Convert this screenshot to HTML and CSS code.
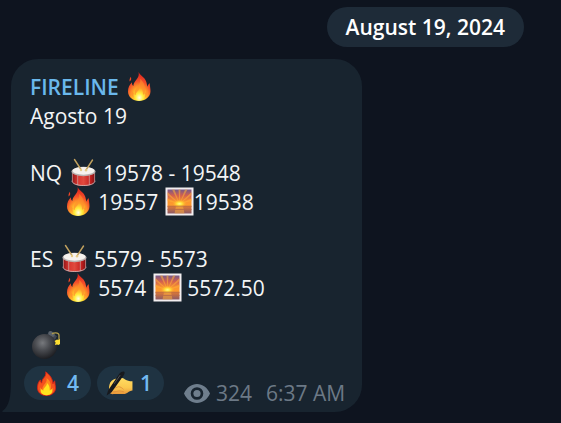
FILE: index.html
```html
<!DOCTYPE html>
<html lang="en">
<head>
<meta charset="utf-8">
<title>FIRELINE</title>
<link rel="stylesheet" href="styles.css">
</head>
<body>
<svg class="defs" aria-hidden="true">
  <defs>
    <radialGradient id="flame" cx=".5" cy=".88" r=".85">
      <stop offset="0" stop-color="#fffbc0"/><stop offset=".2" stop-color="#ffe632"/><stop offset=".42" stop-color="#ffa028"/><stop offset=".66" stop-color="#f4502a"/><stop offset="1" stop-color="#d91f1c"/>
    </radialGradient>
    <radialGradient id="glow" cx=".5" cy=".8" r=".7">
      <stop offset="0" stop-color="#fffde0"/><stop offset=".45" stop-color="#ffee3c"/><stop offset="1" stop-color="#ff9a25"/>
    </radialGradient>
    <linearGradient id="shell">
      <stop offset="0" stop-color="#8d1517"/><stop offset=".25" stop-color="#d8352f"/><stop offset=".5" stop-color="#e04a3e"/><stop offset=".8" stop-color="#c3201f"/><stop offset="1" stop-color="#7d1013"/>
    </linearGradient>
    <linearGradient id="sky" x2="0" y2="1">
      <stop offset="0" stop-color="#75598a"/><stop offset=".35" stop-color="#d2604f"/><stop offset=".7" stop-color="#fb952f"/><stop offset="1" stop-color="#ff9b2d"/>
    </linearGradient>
    <linearGradient id="sea" x2="0" y2="1">
      <stop offset="0" stop-color="#e07a35"/><stop offset="1" stop-color="#8d5964"/>
    </linearGradient>
    <radialGradient id="sun">
      <stop offset="0" stop-color="#fffa8c"/><stop offset=".4" stop-color="#ffdf38"/><stop offset="1" stop-color="#ffae2c" stop-opacity="0"/>
    </radialGradient>
    <radialGradient id="iron" cx=".42" cy=".36" r=".65">
      <stop offset="0" stop-color="#77797d"/><stop offset=".45" stop-color="#4a4c51"/><stop offset="1" stop-color="#1d1e22"/>
    </radialGradient>
    <linearGradient id="skin" x2="0" y2="1">
      <stop offset="0" stop-color="#ffdc62"/><stop offset=".6" stop-color="#fbc84e"/><stop offset="1" stop-color="#e8963a"/>
    </linearGradient>
  </defs>
  <symbol id="fire" viewBox="0 0 29 29">
    <path fill="url(#flame)" d="M13.500 0c.8 3-.1 5.200-2 7.500C9.500 10 8.500 11.600 8.300 14c-1-.8-1.500-2-1.300-3.700C4.500 12.500 3 16 3 19.500 3 25 8 29 14 29s11.500-4 11.500-9.700c0-3-.7-5.300-.7-8-1.300.7-2 1.900-2.400 3.500C21.700 11.500 21.500 9 19.500 6.500 17.600 4.200 15 3.200 13.500 0z"/>
    <path fill="#ef4526" d="M6 4.800C4.800 6.200 4.200 7.900 4.700 9.400c.9-.8 1.500-1.600 1.500-2.700 0-.8-.3-1.200-.2-1.900z"/>
    <path fill="#ff8b2b" opacity=".65" d="M15 7c1 4-1.500 6-3.500 9C10 18.200 9.500 20 10 22c-1.800-.8-3-2.300-3.300-4C5 22 7.500 27 14 27.500c6 0 9-4 8.500-9-.8 1.500-1.600 2.300-2.800 2.700C20.500 15.500 19.500 10 15 7z"/>
    <path fill="url(#glow)" d="M14.500 14.500c.5 2.500-1 4-2.500 5.500-1 1-1.300 2-1.200 3-1-.4-1.600-1-2-2-1.300 4 .7 7.500 5.500 7.500s7-3.500 5.700-7.500c-.6 1-1.200 1.500-2 1.800.2-3.500-.8-6.500-3.500-8.300z"/>
  </symbol>
  <symbol id="fire-flat" viewBox="0 0 29 29">
    <path fill="#f4511e" stroke="#d51f16" d="M13.500 1c.8 3-.4 5-2.200 7C9.600 10 9 11.500 9 14c-1-.7-1.600-2-1.500-3.700C5 12.500 4 16 4 19.500 4 25 8.500 28.500 14.500 28.500S25 25 25 19.500c0-3-1-5-1-8-1.200.7-1.700 1.700-2 3.300C21.700 9 18 4 13.500 1z"/>
    <path fill="#ff8a1c" d="M14.500 8c1 4-1.500 6-3.500 9-1.300 2-1.500 3-1 4.500-1.600-.5-2.600-1.500-3-3C6 24 9 28 14.500 28c6 0 8.500-4 7.500-9-.8 1.400-1.500 2-2.500 2.400C20.500 15 18.500 11 14.500 8z"/>
    <path fill="#ffe51f" d="M15 14c.3 2.800-1.500 4-3 5.700-1 1.100-1.300 2.100-1 3.100-1.200-.2-2-.8-2.500-1.800C7 25 9 28 14.500 28s7.500-3 6-7c-.7 1-1.400 1.500-2.300 1.700.3-3.700-.7-6.700-3.200-8.700z"/>
  </symbol>
  <symbol id="drum" viewBox="0 0 29 29">
    <path fill="url(#shell)" d="M3 13.500h23V23c0 3-5 5-11.500 5S3 26 3 23z"/>
    <path fill="none" stroke="#c9a9a6" stroke-width=".7" d="M3.400 14v9.500M8.700 17v10M20.300 17v10M25.600 14v9.500"/>
    <path fill="none" stroke="#c7c2c2" stroke-width=".8" d="M3 22.800c0 2.800 5 4.700 11.500 4.700S26 25.600 26 22.800"/>
    <ellipse cx="14.500" cy="13.500" rx="12" ry="4.700" fill="#b9b2b0"/>
    <ellipse cx="14.500" cy="12.800" rx="11" ry="3.900" fill="#f6f2ee"/>
    <path fill="none" stroke="#c2a25f" stroke-width="1.400" stroke-linecap="round" d="M5.500 1.500l6.500 10M23.500 2l-6.500 10"/>
    <circle cx="12" cy="12" r="1.200" fill="#e6cb85"/><circle cx="17" cy="12.300" r="1.200" fill="#e6cb85"/>
  </symbol>
  <symbol id="sunrise" viewBox="0 0 29 29">
    <path fill="#f2eef0" d="M.5.500h28v28H.500z"/>
    <path fill="url(#sky)" d="M2.500 2.500h24v17h-24z"/>
    <path fill="#ffb136" opacity=".55" d="M14.500 17L2.500 5v3zM14.500 17L7 2.500h2.500zM14.500 17L13.500 2.500h2zM14.500 17L20 2.500h2.500zM14.500 17l12-12v3zM14.500 17l-12-5.500V14zM14.500 17l12-5.500V14z"/>
    <path fill="url(#sea)" d="M2.500 19h24v7.500h-24z"/>
    <path fill="#ffaf3c" opacity=".5" d="M11 19h7l1.500 7.500h-10z"/>
    <ellipse cx="14.500" cy="16.800" rx="7" ry="4.200" fill="url(#sun)"/>
    <path stroke="#b96a47" stroke-width=".8" d="M2.500 19.200h24M2.500 22.500h24"/>
  </symbol>
  <symbol id="bomb" viewBox="0 0 29 29">
    <path fill="#3f4650" d="M16 4.500l3.500-3.300 6.500 5-2.500 4.500z"/>
    <ellipse cx="20.500" cy="4" rx="3.500" ry="2.300" fill="#59616b" transform="rotate(38 20.500 4)"/>
    <circle cx="13.500" cy="16.500" r="12.500" fill="url(#iron)"/>
    <path fill="none" stroke="#b09c4c" stroke-width="1.300" d="M21 4c1.500-1.300 6.500-1.800 7 1v6"/>
    <path fill="#ffdf32" d="M26 9.500l1.500.6L29 9v5l-1.500 1-1.500-.5-2 .5.600-2.500L23.500 11z"/>
  </symbol>
  <symbol id="writing" viewBox="0 0 29 27">
    <path fill="url(#skin)" d="M4.500 12.500c2-3.500 5.500-4.700 9-4.500 2.500-.7 5-.5 7 1.200 2.500 1.300 4 1.800 8 2V21c-2 .4-3.700 1-5 2.200-1 1-2.500 1.600-5 1.700H8.500c-2 .3-4-.2-4.500-1.300-1.300-.7-1.500-2.500-.5-3.500-.7-1.700-.2-4.700 1-7.600z"/>
    <path fill="none" stroke="#dd8c3a" stroke-width=".9" stroke-linecap="round" d="M7 19c3-.5 4.500-1.600 6.500-2 2 0 4 1.500 5 2.500M8 22.500c2.500.3 4.500-1 6.500-1s3 1 4.500 1"/>
    <path fill="#17191d" d="M.5 26.500l1.800-5.800L14.500 2.700C16.200.200 19.800-.300 20 1.500c.2 1.500-.8 3-1.700 4.300L6 23z"/>
    <path fill="none" stroke="#55585c" stroke-width=".9" stroke-linecap="round" d="M9 13.500l6-8.700"/>
  </symbol>
</svg>

<main class="chat">
  <time class="date" datetime="2024-08-19">August 19, 2024</time>
  <article class="message">
    <svg class="tail" viewBox="0 0 10 32" aria-hidden="true"><path d="M10 0v32H1c-1 0-1-1 0-1.500C7 26 9 18 9 0z"/></svg>
    <div class="text">
      <p>
        <strong class="line name">FIRELINE <svg class="emoji" role="img" aria-label="fire"><use href="#fire"/></svg></strong>
        <span class="line">Agosto 19</span>
      </p>
      <p>
        <span class="line">NQ <svg class="emoji" role="img" aria-label="drum"><use href="#drum"/></svg> 19578 - 19548</span>
        <span class="line">      <svg class="emoji" role="img" aria-label="fire"><use href="#fire"/></svg> 19557 <svg class="emoji" role="img" aria-label="sunrise"><use href="#sunrise"/></svg>19538</span>
      </p>
      <p>
        <span class="line">ES <svg class="emoji" role="img" aria-label="drum"><use href="#drum"/></svg> 5579 - 5573</span>
        <span class="line">      <svg class="emoji" role="img" aria-label="fire"><use href="#fire"/></svg> 5574 <svg class="emoji" role="img" aria-label="sunrise"><use href="#sunrise"/></svg> 5572.50</span>
      </p>
      <p>
        <span class="line"><svg class="emoji" role="img" aria-label="bomb"><use href="#bomb"/></svg></span>
      </p>
    </div>
    <footer class="footer">
      <button class="reaction" type="button"><svg class="reaction-icon" role="img" aria-label="fire"><use href="#fire-flat"/></svg>4</button>
      <button class="reaction" type="button"><svg class="reaction-icon" role="img" aria-label="writing hand"><use href="#writing"/></svg>1</button>
      <div class="meta">
        <svg class="eye" viewBox="0 0 26 19" role="img" aria-label="views"><path fill-rule="evenodd" d="M13 0c5.500 0 10.300 3.500 13 9.500C23.300 15.500 18.500 19 13 19S2.700 15.500 0 9.500C2.700 3.500 7.500 0 13 0zm0 3.200a6.300 6.300 0 1 0 0 12.600 6.300 6.300 0 0 0 0-12.600z"/><circle cx="13" cy="9.500" r="3.600"/></svg>
        <span>324</span>
        <time class="time" datetime="2024-08-19T06:37">6:37 AM</time>
      </div>
    </footer>
  </article>
</main>
</body>
</html>
```
FILE: styles.css
```css
* { box-sizing: border-box; }

body {
  margin: 0;
  min-height: 100vh;
  background: #0e141f;
  color: #f3f5f6;
  font: 400 21px/29px "Open Sans", "Noto Sans", sans-serif;
}

.defs { position: absolute; width: 0; height: 0; }

.chat {
  display: flex;
  flex-direction: column;
  align-items: flex-start;
  gap: 12px;
  padding: 7px 37px 10px 11px;
}

.date {
  align-self: flex-end;
  padding: 6px 19px 5px;
  border-radius: 20px;
  background: #1e2b38;
  color: #fff;
  font-weight: 600;
}

.message {
  position: relative;
  padding: 14px 17px 4px 13px;
  border-radius: 27px 27px 27px 0;
  background: #18242f;
}

.tail {
  position: absolute;
  left: -9px;
  bottom: 0;
  width: 10px;
  height: 32px;
  fill: #18242f;
}

.text {
  display: flex;
  flex-direction: column;
  gap: 28px;
  padding-left: 6px;
}

.text p { margin: 0; }

.line {
  display: block;
  height: 29px;
  white-space: pre;
}

.name {
  color: #6ab8ec;
  font-weight: 600;
}

.emoji {
  width: 29px;
  height: 29px;
  margin: -4px 0 -4px 1px;
  vertical-align: -2px;
}

.footer {
  display: flex;
  align-items: flex-start;
  gap: 6px;
  padding-top: 6px;
}

.reaction {
  display: flex;
  align-items: center;
  gap: 7px;
  height: 34px;
  padding: 0 12px 0 9px;
  border: 0;
  border-radius: 17px;
  background: #1f3342;
  color: #72baf2;
  font: inherit;
  font-weight: 600;
}

.reaction-icon {
  width: 27px;
  height: 25px;
}

.meta {
  display: flex;
  align-items: center;
  gap: 6px;
  margin: 13px 0 0 14px;
  height: 29px;
  color: #6c7986;
}

.eye {
  width: 26px;
  height: 19px;
  fill: #6f7e8d;
}

.time { margin-left: 8px; }
```
